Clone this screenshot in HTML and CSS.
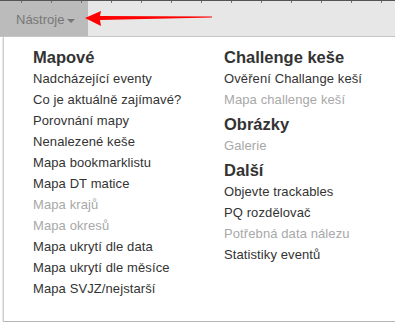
FILE: index.html
```html
<!DOCTYPE html>
<html lang="cs">
<head>
    <meta charset="UTF-8">
    <meta name="viewport" content="width=device-width, initial-scale=1.0">
    <title>Nástroje</title>
    <link rel="stylesheet" href="styles.css">
</head>
<body>
    <nav class="navbar">
        <a class="nav-toggle" href="#">Nástroje <span class="caret"></span></a>
        <svg class="pointer" width="130" height="20" viewBox="0 0 130 20">
            <polygon points="0,8 16,1 15,6 127,6.4 127,7.6 15,10 16,16" fill="#ff0000"/>
        </svg>
    </nav>
    <div class="dropdown">
        <ul class="column">
            <li class="header">Mapové</li>
            <li><a href="#">Nadcházející eventy</a></li>
            <li><a href="#">Co je aktuálně zajímavé?</a></li>
            <li><a href="#">Porovnání mapy</a></li>
            <li><a href="#">Nenalezené keše</a></li>
            <li><a href="#">Mapa bookmarklistu</a></li>
            <li><a href="#">Mapa DT matice</a></li>
            <li class="disabled">Mapa krajů</li>
            <li class="disabled">Mapa okresů</li>
            <li><a href="#">Mapa ukrytí dle data</a></li>
            <li><a href="#">Mapa ukrytí dle měsíce</a></li>
            <li><a href="#">Mapa SVJZ/nejstarší</a></li>
        </ul>
        <ul class="column">
            <li class="header">Challenge keše</li>
            <li><a href="#">Ověření Challange keší</a></li>
            <li class="disabled">Mapa challenge keší</li>
            <li class="header">Obrázky</li>
            <li class="disabled">Galerie</li>
            <li class="header">Další</li>
            <li><a href="#">Objevte trackables</a></li>
            <li><a href="#">PQ rozdělovač</a></li>
            <li class="disabled">Potřebná data nálezu</li>
            <li><a href="#">Statistiky eventů</a></li>
        </ul>
    </div>
</body>
</html>
```

FILE: styles.css
```css
body {
    font-family: "Liberation Sans", Arial, sans-serif;
    margin: 0;
    padding: 0;
    background: #fff;
    overflow: hidden;
    color: #333;
}
.navbar {
    position: relative;
    display: flex;
    height: 35px;
    background-color: #e7e7e7;
    border-top: 1px solid #555;
    border-bottom: 1px solid #c4c4c4;
}
.navbar::before {
    content: "";
    position: absolute;
    top: 0;
    left: 0;
    right: 0;
    height: 2px;
    background: repeating-linear-gradient(90deg, transparent 0, transparent 21px, #777 21px, #777 22px, transparent 22px, transparent 30px);
}
.nav-toggle {
    display: flex;
    align-items: center;
    width: 72px;
    padding: 2px 0 0 16px;
    background-color: #bbb;
    color: #777;
    font-size: 13px;
    text-decoration: none;
}
.caret {
    display: inline-block;
    margin-left: 3px;
    margin-top: 2px;
    border-top: 4px solid #777;
    border-left: 4px solid transparent;
    border-right: 4px solid transparent;
}
.pointer {
    position: absolute;
    left: 85px;
    top: 9px;
}
.dropdown {
    display: flex;
    width: 392px;
    height: 285px;
    box-sizing: border-box;
    margin-left: 3px;
    padding: 9px 0 0 29px;
    border-left: 1px solid #ccc;
    border-bottom: 1px solid #b5b5b5;
    box-shadow: 0 1px 2px rgba(0, 0, 0, 0.25);
}
.column {
    list-style: none;
    margin: 0;
    padding: 0;
    flex: 0 0 191px;
}
.column:last-child {
    flex: 1 1 auto;
}
.column li {
    font-size: 13px;
    letter-spacing: 0.1px;
    line-height: 21px;
    white-space: nowrap;
}
.column a {
    color: #333;
    text-decoration: none;
}
.column .header {
    font-size: 16.5px;
    font-weight: bold;
    letter-spacing: 0;
    line-height: 22px;
    margin-top: 3px;
    color: #333;
}
.column .header:first-child {
    margin-top: 0;
}
.column .disabled {
    color: #a8a8a8;
}
```
